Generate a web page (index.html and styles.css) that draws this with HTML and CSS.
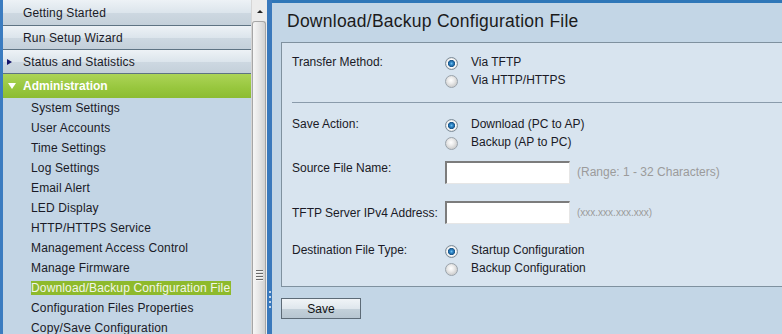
FILE: index.html
```html
<!DOCTYPE html>
<html>
<head>
<meta charset="utf-8">
<link rel="stylesheet" href="styles.css">
</head>
<body>
<div class="app">
  <div class="edge"></div>
  <nav class="nav">
    <div class="top first"><span class="ico"></span>Getting Started</div>
    <div class="top"><span class="ico"></span>Run Setup Wizard</div>
    <div class="top"><span class="ico"><span class="tri-r"></span></span>Status and Statistics</div>
    <div class="section"><span class="ico"><span class="tri-d"></span></span>Administration</div>
    <ul class="sub">
      <li>System Settings</li>
      <li>User Accounts</li>
      <li>Time Settings</li>
      <li>Log Settings</li>
      <li>Email Alert</li>
      <li>LED Display</li>
      <li>HTTP/HTTPS Service</li>
      <li>Management Access Control</li>
      <li>Manage Firmware</li>
      <li><span class="current">Download/Backup Configuration File</span></li>
      <li>Configuration Files Properties</li>
      <li>Copy/Save Configuration</li>
    </ul>
  </nav>
  <div class="scrollbar">
    <div class="arrow-cell"><span class="arrow-up"></span></div>
    <div class="thumb"><div class="grip"><i></i><i></i><i></i><i></i></div></div>
  </div>
  <div class="splitter"><i></i><i></i><i></i><i></i></div>
  <main class="content">
    <h1 class="title">Download/Backup Configuration File</h1>
    <div class="box">
      <div class="field">
        <div class="label">Transfer Method:</div>
        <div class="options">
          <div class="opt"><span class="radio on"></span>Via TFTP</div>
          <div class="opt"><span class="radio"></span>Via HTTP/HTTPS</div>
        </div>
      </div>
      <div class="sep"></div>
      <div class="field">
        <div class="label">Save Action:</div>
        <div class="options">
          <div class="opt"><span class="radio on"></span>Download (PC to AP)</div>
          <div class="opt"><span class="radio"></span>Backup (AP to PC)</div>
        </div>
      </div>
      <div class="field input-row first-input">
        <div class="label label-top">Source File Name:</div>
        <input class="text" type="text">
        <span class="hint">(Range: 1 - 32 Characters)</span>
      </div>
      <div class="field input-row second-input">
        <div class="label">TFTP Server IPv4 Address:</div>
        <input class="text" type="text">
        <span class="hint small">(xxx.xxx.xxx.xxx)</span>
      </div>
      <div class="field dest">
        <div class="label">Destination File Type:</div>
        <div class="options">
          <div class="opt"><span class="radio on"></span>Startup Configuration</div>
          <div class="opt"><span class="radio"></span>Backup Configuration</div>
        </div>
      </div>
    </div>
    <button class="btn" type="button">Save</button>
  </main>
</div>
</body>
</html>
```
FILE: styles.css
```css
html, body {
  margin: 0;
  padding: 0;
}
body {
  width: 782px;
  height: 334px;
  overflow: hidden;
  font-family: "Liberation Sans", Arial, sans-serif;
  font-size: 12px;
  color: #1a1a26;
}
.app {
  display: flex;
  height: 334px;
}
.edge {
  width: 3px;
  flex: none;
  background: #3b7cc0;
}
.nav {
  width: 248px;
  flex: none;
  background: #c3d5e5;
  overflow: hidden;
  letter-spacing: 0.15px;
}
.top {
  display: flex;
  align-items: center;
  height: 24px;
  box-sizing: border-box;
  border-bottom: 1px solid #5e7383;
  background: linear-gradient(#edf2f6, #dce5ec 50%, #cdd8e1 52%, #c4d0da);
  white-space: nowrap;
}
.top.first {
  height: 26px;
  padding-top: 1px;
}
.ico {
  width: 20px;
  flex: none;
  display: flex;
  align-items: center;
  padding-left: 4px;
  box-sizing: border-box;
}
.tri-r {
  width: 0;
  height: 0;
  border-top: 3px solid transparent;
  border-bottom: 3px solid transparent;
  border-left: 5px solid #14146a;
}
.tri-d {
  width: 0;
  height: 0;
  border-left: 4px solid transparent;
  border-right: 4px solid transparent;
  border-top: 6px solid #ffffff;
  margin-left: 1px;
}
.section {
  display: flex;
  align-items: center;
  height: 24px;
  background: linear-gradient(#acd457, #97c63d 60%, #8cbc32);
  color: #ffffff;
  font-weight: bold;
  letter-spacing: 0;
}
.sub {
  list-style: none;
  margin: 0;
  padding: 0;
}
.sub li {
  height: 20px;
  line-height: 20px;
  padding-left: 28px;
  white-space: nowrap;
}
.current {
  display: inline-block;
  line-height: 14px;
  padding: 0 1px 0 0;
  background: #8eba2c;
  color: #f2f6e8;
}
.scrollbar {
  width: 16px;
  flex: none;
  display: flex;
  flex-direction: column;
  background: #ececec;
  border-left: 1px solid #d6d6d6;
  box-sizing: border-box;
}
.arrow-cell {
  height: 21px;
  flex: none;
  display: flex;
  justify-content: center;
  padding-top: 10px;
  box-sizing: border-box;
}
.arrow-up {
  width: 0;
  height: 0;
  border-left: 3px solid transparent;
  border-right: 3px solid transparent;
  border-bottom: 3px solid #222;
}
.thumb {
  flex: 1;
  margin: 0 1px 0 0;
  border: 1px solid #a6a6a6;
  border-bottom: none;
  border-radius: 3px 3px 0 0;
  background: linear-gradient(to right, #f6f6f6, #e6e6e6 50%, #d2d2d2);
  padding-top: 248px;
  box-sizing: border-box;
}
.grip {
  display: flex;
  flex-direction: column;
  align-items: center;
  gap: 1px;
}
.grip i {
  display: block;
  width: 7px;
  height: 1px;
  background: #6a6a6a;
  border-bottom: 1px solid #f4f4f4;
}
.splitter {
  width: 5px;
  flex: none;
  background: #3a79bc;
  display: flex;
  flex-direction: column;
  align-items: center;
  padding-top: 291px;
  gap: 3px;
  box-sizing: border-box;
}
.splitter i {
  display: block;
  width: 2px;
  height: 2px;
  background: #c6d8ea;
}
.content {
  flex: 1;
  min-width: 0;
  background: #c3d6e6;
  border-top: 3px solid #2f77b8;
  overflow: hidden;
}
.title {
  margin: 0;
  height: 39px;
  line-height: 36px;
  padding-left: 15px;
  font-size: 17.5px;
  font-weight: normal;
  letter-spacing: 0.25px;
  color: #1b1b1b;
  white-space: nowrap;
}
.box {
  margin-left: 9px;
  border: 1px solid #7f919f;
  border-right: none;
  background: #d8e4ef;
  padding: 10px 0 9px 10px;
}
.field {
  display: flex;
  align-items: flex-start;
}
.label {
  width: 153px;
  flex: none;
  line-height: 18px;
  white-space: nowrap;
}
.options {
  display: flex;
  flex-direction: column;
}
.opt {
  display: flex;
  align-items: center;
  height: 18px;
  white-space: nowrap;
}
.radio {
  width: 13px;
  height: 13px;
  flex: none;
  box-sizing: border-box;
  border-radius: 50%;
  margin: 2px 13px 0 0;
  border: 1px solid #9aa3ab;
  background: radial-gradient(circle at 45% 40%, #ffffff 0, #ececec 3px, #d2d2d2 6px);
}
.radio.on {
  border-color: #7e8d99;
  background: radial-gradient(circle at 50% 50%, #6fc0f0 0, #2f86c8 1.5px, #1b5689 3.3px, #ffffff 3.9px, #f1f1f1 4.6px, #cfcfcf 6px);
}
.sep {
  height: 1px;
  background: #8a9bab;
  margin: 13px 0 12px 0;
}
.first-input {
  margin-top: 10px;
}
.label-top {
  line-height: 15px;
}
.second-input {
  margin-top: 17px;
  align-items: center;
}
.text {
  width: 125px;
  height: 23px;
  box-sizing: border-box;
  margin: 0;
  padding: 0 3px;
  background: #ffffff;
  border-top: 2px solid #7c7c7c;
  border-left: 2px solid #7c7c7c;
  border-right: 1px solid #e6e6e6;
  border-bottom: 1px solid #e6e6e6;
  font-family: "Liberation Sans", Arial, sans-serif;
  font-size: 12px;
  flex: none;
}
.hint {
  margin-left: 7px;
  color: #9b9b9b;
  white-space: nowrap;
  line-height: 23px;
  height: 23px;
}
.hint.small {
  font-size: 10px;
}
.dest {
  margin-top: 17px;
}
.btn {
  display: block;
  margin: 11px 0 0 9px;
  width: 80px;
  height: 21px;
  padding: 0;
  border: 1px solid #5d6b77;
  background: linear-gradient(#f0f4f7, #dfe7ed 50%, #c4d1da 52%, #b7c6d1);
  font-family: "Liberation Sans", Arial, sans-serif;
  font-size: 12px;
  color: #111;
}
```
